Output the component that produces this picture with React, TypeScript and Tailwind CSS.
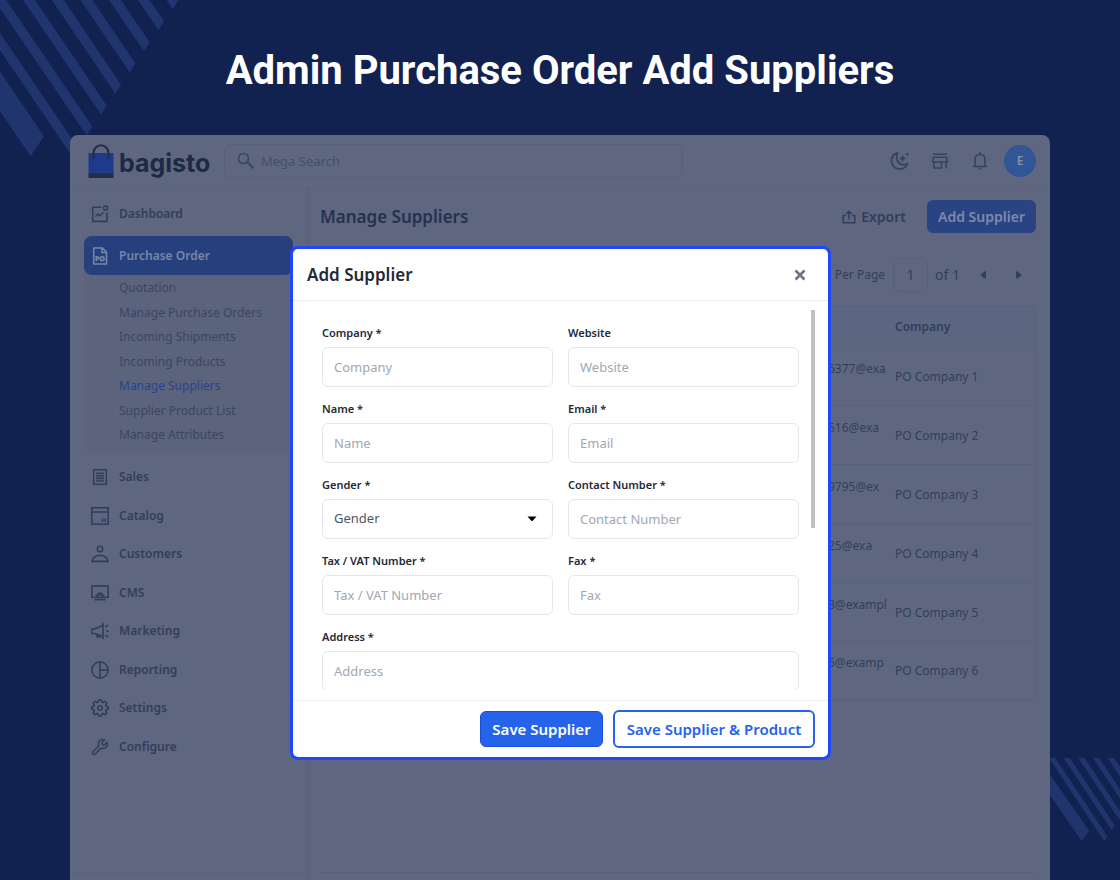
import React, { useState } from "react";
import { Wrench } from "lucide-react";

const NAV_ICONS: Record<string, React.ReactNode> = {
  Sales: (
    <>
      <rect x="2.7" y="1.7" width="12.6" height="14.6" />
      <path d="M5 5.2h8M5 7.8h8M5 10.4h8M5 13h8" />
    </>
  ),
  Catalog: (
    <>
      <rect x="0.8" y="0.8" width="16.4" height="16.4" />
      <path d="M1 5h16M11.5 11.5v3.5M14.3 11.5v3.5" />
    </>
  ),
  Customers: (
    <>
      <circle cx="9" cy="4" r="2.7" />
      <path d="M1 16.4c.8-4 4-6 8-6s7.2 2 8 6z" />
    </>
  ),
  CMS: (
    <>
      <rect x="0.9" y="2" width="16.2" height="11.4" />
      <path d="M3.5 15.7h11" />
      <path
        d="M4.6 12.8l.2-2.2 1.5-.2.5-1.8 1.3.4.9-1.2.9 1.2 1.3-.4.5 1.8 1.5.2.2 2.2H11c-.3-2-3.7-2-4 0z"
        fill="currentColor"
        stroke="none"
      />
    </>
  ),
  Marketing: (
    <path d="M12 .8v16.4M12 3.2L3.500 7H1.200C-.2 8-.2 10.500 1.200 11.500H4l8 3M5 12l1.500 3.200 2.500-.3-1-1.700M14.500 5.200L17 2.700M15 9h3M14.500 12.700l2.500 2.500" />
  ),
  Reporting: (
    <>
      <circle cx="9" cy="9" r="8.1" />
      <path d="M9 1v16M9 9h8" />
    </>
  ),
  Settings: (
    <>
      <circle cx="9" cy="9" r="2.2" />
      <path d="M7.6 1h2.8l.4 2 1.4.6 1.7-1.2 1.9 1.9-1.2 1.7.6 1.4 1.9.3v2.7l-1.9.3-.6 1.4 1.2 1.7-1.9 1.9-1.7-1.2-1.4.6-.4 1.9H7.6l-.4-1.9-1.4-.6-1.7 1.2-1.9-1.9 1.2-1.7-.6-1.4L.9 10.4V7.7l1.9-.3.6-1.4-1.2-1.7 1.9-1.9 1.7 1.2 1.4-.6z" />
    </>
  ),
};

const SUB_ITEMS = [
  "Quotation",
  "Manage Purchase Orders",
  "Incoming Shipments",
  "Incoming Products",
  "Manage Suppliers",
  "Supplier Product List",
  "Manage Attributes",
];

const NAV_ITEMS = [
  "Sales",
  "Catalog",
  "Customers",
  "CMS",
  "Marketing",
  "Reporting",
  "Settings",
  "Configure",
];

const SUPPLIERS = [
  { email: "6377@exa", company: "PO Company 1" },
  { email: "516@exa", company: "PO Company 2" },
  { email: "9795@ex", company: "PO Company 3" },
  { email: "25@exa", company: "PO Company 4" },
  { email: "8@exampl", company: "PO Company 5" },
  { email: "5@examp", company: "PO Company 6" },
];

function Icon({ children }: { children: React.ReactNode }) {
  return (
    <svg
      className="size-[18px] shrink-0"
      viewBox="0 0 18 18"
      fill="none"
      stroke="currentColor"
      strokeWidth="1.6"
      aria-hidden
    >
      {children}
    </svg>
  );
}

function Stripes() {
  return (
    <>
      <svg
        className="absolute left-0 top-0 h-[200px] w-[240px] fill-[#20356d]"
        viewBox="0 0 720 600"
        aria-hidden
      >
        {[0, 1, 2, 3, 4, 5, 6, 7].map((i) => {
          const x = 535 - i * 43;
          const y = i * 63.3;
          return (
            <polygon
              key={i}
              points={`${x},${y} ${x - 17},${y + 27} ${x - 17 - (y + 27) * 0.68},0 ${x - y * 0.68},0`}
            />
          );
        })}
        <polygon points="-146,0 132,409 92,469 -227,0" />
      </svg>
      <svg
        className="absolute bottom-[35px] right-0 h-[87px] w-[70px] fill-[#20356d]"
        viewBox="0 0 210 261"
        aria-hidden
      >
        <polygon points="0,49 117,218 95,249 0,111" />
        {[0, 1, 2, 3, 4].map((i) => {
          const x = 173 + i * 22;
          const y = 236 - i * 33;
          return (
            <polygon
              key={i}
              points={`${x},${y} ${x - 10},${y + 14} ${x - 10 - (y + 14) * 0.665},0 ${x - y * 0.665},0`}
            />
          );
        })}
      </svg>
    </>
  );
}

function TopBar() {
  return (
    <header className="flex h-[53px] items-center border-b border-[#5a627c] pl-[18px] pr-[14px]">
      <a href="#" className="flex w-[136px] items-center gap-[5px]">
        <svg className="h-[34px] w-[26px]" viewBox="0 0 26 34" aria-hidden>
          <rect x="0.5" y="9" width="25" height="21" fill="#1f3a8a" />
          <rect x="0.5" y="29.5" width="25" height="4.5" fill="#222c45" />
          <path
            d="M5.5 15V9a7.5 7.8 0 0 1 15 0v6"
            fill="none"
            stroke="#222c45"
            strokeWidth="2"
          />
        </svg>
        <span className="pt-[3px] font-['Inter',sans-serif] text-[25px] font-bold leading-8 text-[#1d2945]">
          bagisto
        </span>
      </a>
      <label className="flex h-[34px] w-[459px] items-center gap-1.5 rounded-md border border-[#596179] px-3">
        <svg className="size-[18px] shrink-0" viewBox="0 0 18 18" fill="none" stroke="#3b4763" aria-hidden>
          <circle cx="6.5" cy="6.5" r="5" strokeWidth="1.7" />
          <path d="M10.3 10.3l6 6" strokeWidth="2.2" />
        </svg>
        <input
          type="text"
          placeholder="Mega Search"
          aria-label="Mega Search"
          className="min-w-0 flex-1 bg-transparent pt-0.5 text-[13px] outline-none placeholder:text-[#444f6b]"
        />
      </label>
      <div className="ml-auto flex items-center gap-5 text-[#36425f]">
        <button type="button" aria-label="Dark mode">
          <svg className="size-5" viewBox="0 0 20 20" aria-hidden>
            <path
              d="M7.5 2C3.300 3 1.200 6.500 1.500 10.800c.5 4.400 4 7.300 8.300 7.200 3.700-.1 6.500-2.200 7.700-5.300-3.500 1.700-7 1.200-9-1.300-2-2.600-2.500-6.200-1-9.400z"
              fill="none"
              stroke="currentColor"
              strokeWidth="1.8"
              strokeLinejoin="round"
            />
            <path
              d="M12.5 3.800l1.200 2.400 2.400 1.200-2.400 1.200-1.200 2.400-1.200-2.400-2.400-1.200 2.400-1.200zM17.200 1.300l.6 1.400 1.400.6-1.400.6-.6 1.400-.6-1.400-1.400-.6 1.400-.6z"
              fill="currentColor"
            />
          </svg>
        </button>
        <button type="button" aria-label="Visit shop">
          <svg className="size-5" viewBox="0 0 20 20" fill="none" stroke="currentColor" strokeWidth="1.6" aria-hidden>
            <path d="M3 3.300h14M3.500 6.300h13l1 4.700H2.500zM4 11v6h7.500v-6M16.200 11v6.500" />
          </svg>
        </button>
        <button type="button" aria-label="Notifications">
          <svg className="size-5" viewBox="0 0 20 20" fill="none" stroke="currentColor" strokeWidth="1.6" aria-hidden>
            <path d="M3 15.500h14M5 15.500V8.500c0-3 2-5 5-5s5 2 5 5v7M10 1.300v2" />
            <path d="M8.300 17.200h3.400c-.3 1.800-3.100 1.800-3.400 0z" fill="currentColor" stroke="none" />
          </svg>
        </button>
        <button
          type="button"
          className="-ml-1.5 size-8 rounded-full bg-[#305696] text-xs font-semibold text-[#8592b0]"
        >
          E
        </button>
      </div>
    </header>
  );
}

function Sidebar() {
  return (
    <nav className="flex w-[236px] shrink-0 flex-col border-b border-[#5a627c] pl-3.5 text-[#323e5b]">
      <a href="#" className="mt-[7px] flex h-[38px] items-center gap-2.5 pl-[7px] text-xs font-semibold">
        <Icon>
          <path d="M10.5 2.200H1.700v14.200h14.200V7.500M4.500 11.500l2.500-2.500 2 1.700 3.500-3.400" />
          <circle cx="14.600" cy="2.900" r="2" />
        </Icon>
        Dashboard
      </a>
      <div className="mt-[3px] w-[209px] rounded-lg bg-[#5b637d]">
        <a
          href="#"
          className="flex h-[39px] items-center gap-2.5 rounded-lg bg-[#26407e] pl-[7px] text-xs font-semibold text-[#7886a5]"
        >
          <Icon>
            <path d="M2.700 1h8.800l4 4v12H2.700zM11 1v4.500h4.500" />
            <path d="M5.200 14V9.800h1.200a1.200 1.200 0 0 1 0 2.400H5.200" />
            <circle cx="11.200" cy="11.800" r="1.900" />
          </Icon>
          Purchase Order
        </a>
        <ul className="flex h-[178px] flex-col justify-between pb-2 pl-[35px] pt-[3px] text-xs leading-5 text-[#3b4661]">
          {SUB_ITEMS.map((item) => (
            <li key={item}>
              <a href="#" className={item === "Manage Suppliers" ? "text-[#26438c]" : ""}>
                {item}
              </a>
            </li>
          ))}
        </ul>
      </div>
      <ul className="mt-3.5 flex h-[290px] flex-col justify-between pl-[7px] text-xs font-semibold leading-5">
        {NAV_ITEMS.map((item) => (
          <li key={item}>
            <a href="#" className="flex items-center gap-2.5">
              {NAV_ICONS[item] ? (
                <Icon>{NAV_ICONS[item]}</Icon>
              ) : (
                <Wrench className="size-[18px]" />
              )}
              {item}
            </a>
          </li>
        ))}
      </ul>
    </nav>
  );
}

function SupplierList() {
  return (
    <main className="ml-[9px] mr-3.5 min-w-0 flex-1 border-b border-[#586079] pt-3 text-[#323e5b]">
      <div className="flex h-[33px] items-center">
        <h2 className="text-[17px] font-semibold text-[#26314f]">Manage Suppliers</h2>
        <button type="button" className="ml-auto flex items-center gap-[5px] text-sm font-semibold">
          <svg className="size-3.5" viewBox="0 0 14 14" fill="none" stroke="currentColor" strokeWidth="1.5" aria-hidden>
            <path d="M4 5.500H1.200v7.300h11.600V5.500H10M7 9.500V1.500M4.300 4L7 1.400 9.700 4" />
          </svg>
          Export
        </button>
        <button
          type="button"
          className="ml-[21px] h-[33px] w-[109px] rounded-md bg-[#2a4382] text-sm font-semibold text-[#7d8aa9]"
        >
          Add Supplier
        </button>
      </div>

      <div className="mt-6 flex h-[35px] items-center justify-end text-xs">
        <span>Per Page</span>
        <input
          type="text"
          defaultValue="1"
          aria-label="Page"
          className="ml-2 h-[34px] w-[35px] rounded-md border border-[#596179] bg-transparent text-center text-sm outline-none"
        />
        <span className="ml-[7px] text-sm">of 1</span>
        <button type="button" aria-label="Previous page" className="ml-[15px] p-1">
          <svg className="size-2" viewBox="0 0 8 8" fill="currentColor" aria-hidden>
            <path d="M1 4L5.500.5H7v7H5.500z" />
          </svg>
        </button>
        <button type="button" aria-label="Next page" className="ml-5 mr-[9px] p-1">
          <svg className="size-2" viewBox="0 0 8 8" fill="currentColor" aria-hidden>
            <path d="M7 4L2.500.5H1v7h1.500z" />
          </svg>
        </button>
      </div>

      <div className="mt-3.5 overflow-hidden rounded border border-[#59627c]">
        <table className="h-[392px] w-full text-left text-xs">
          <thead>
            <tr className="h-10 bg-[#5c6680]">
              <th />
              <th className="w-[67px]" />
              <th className="w-[140px] font-semibold">Company</th>
            </tr>
          </thead>
          <tbody>
            {SUPPLIERS.map((row) => (
              <tr key={row.company} className="border-t border-[#59627c]">
                <td />
                <td className="pb-3.5">{row.email}</td>
                <td className="pt-0.5">{row.company}</td>
              </tr>
            ))}
          </tbody>
        </table>
      </div>
    </main>
  );
}

const FIELD =
  "h-10 w-full rounded-md border border-[#e5e7eb] bg-white px-[11px] text-[13px] text-[#4b5563] outline-none placeholder:text-[#a1a7b3]";

const LABEL = "mb-1.5 block text-[11px] font-semibold leading-4 text-[#1f2937]";

function Field({
  id,
  label,
  required = true,
  wide = false,
}: {
  id: string;
  label: string;
  required?: boolean;
  wide?: boolean;
}) {
  return (
    <div className={wide ? "col-span-2" : ""}>
      <label htmlFor={id} className={LABEL}>
        {label}
        {required && " *"}
      </label>
      <input id={id} type="text" placeholder={label} className={FIELD} />
    </div>
  );
}

function AddSupplierDialog() {
  const [gender, setGender] = useState("");

  return (
    <div className="absolute inset-x-0 top-[111px] flex justify-center pl-px">
      <div
        role="dialog"
        aria-labelledby="dialog-title"
        className="w-[541px] rounded-lg border-3 border-[#1f48fb] bg-white text-[#1f2937]"
      >
        <div className="flex h-[52px] items-center justify-between border-b border-[#e9eaee] pl-3.5 pr-[22px]">
          <h3 id="dialog-title" className="text-[17px] font-semibold">
            Add Supplier
          </h3>
          <button type="button" aria-label="Close" className="text-[#6b7280]">
            <svg className="size-3" viewBox="0 0 12 12" stroke="currentColor" strokeWidth="2.6" aria-hidden>
              <path d="M1.500 1.500l9 9M10.500 1.500l-9 9" />
            </svg>
          </button>
        </div>

        <form className="mb-2.5 mt-[9px] flex h-[380px] overflow-hidden pl-[29px] pr-[13px]">
          <div className="grid flex-1 auto-rows-[62px] grid-cols-2 gap-x-[15px] gap-y-3.5 pt-[15px]">
            <Field id="company" label="Company" />
            <Field id="website" label="Website" required={false} />
            <Field id="name" label="Name" />
            <Field id="email" label="Email" />
            <div>
              <label htmlFor="gender" className={LABEL}>
                Gender *
              </label>
              <div className="relative">
                <select
                  id="gender"
                  value={gender}
                  onChange={(e) => setGender(e.target.value)}
                  className={`${FIELD} appearance-none`}
                >
                  <option value="">Gender</option>
                  <option value="male">Male</option>
                  <option value="female">Female</option>
                </select>
                <svg
                  className="pointer-events-none absolute right-4 top-[17px] h-1.5 w-2.5"
                  viewBox="0 0 10 6"
                  aria-hidden
                >
                  <path d="M.5.500h9L5.500 5h-1z" fill="#000" />
                </svg>
              </div>
            </div>
            <Field id="contact" label="Contact Number" />
            <Field id="vat" label="Tax / VAT Number" />
            <Field id="fax" label="Fax" />
            <Field id="address" label="Address" wide />
          </div>
          <div className="ml-3 h-[218px] w-1 bg-[#c1c1c1]" />
        </form>

        <div className="flex h-[57px] items-center justify-end gap-2.5 border-t border-[#eceef1] pr-[13px]">
          <button
            type="button"
            className="h-9 w-[123px] rounded-md border border-[#1d4ed8] bg-[#2563eb] text-[15px] font-semibold text-white"
          >
            Save Supplier
          </button>
          <button
            type="button"
            className="h-[38px] w-[202px] rounded-md border-2 border-[#2563eb] bg-white text-[15px] font-semibold text-[#2563eb]"
          >
            Save Supplier &amp; Product
          </button>
        </div>
      </div>
    </div>
  );
}

export default function App() {
  return (
    <div className="relative flex min-h-screen flex-col overflow-hidden bg-[#112150] font-['Noto_Sans',sans-serif]">
      <Stripes />
      <h1 className="relative flex h-[135px] items-center justify-center pt-1.5 text-center font-['Roboto',sans-serif] text-[40px] font-bold text-white">
        Admin Purchase Order Add Suppliers
      </h1>
      <div className="relative mx-[70px] flex flex-1 flex-col rounded-t-lg bg-[#5f6780]">
        <TopBar />
        <div className="mb-[7px] flex flex-1">
          <Sidebar />
          <div className="-mb-[7px] w-[5px] shrink-0 bg-linear-to-r from-[#5a617b] to-[#5e667f]" />
          <SupplierList />
        </div>
        <AddSupplierDialog />
      </div>
    </div>
  );
}
